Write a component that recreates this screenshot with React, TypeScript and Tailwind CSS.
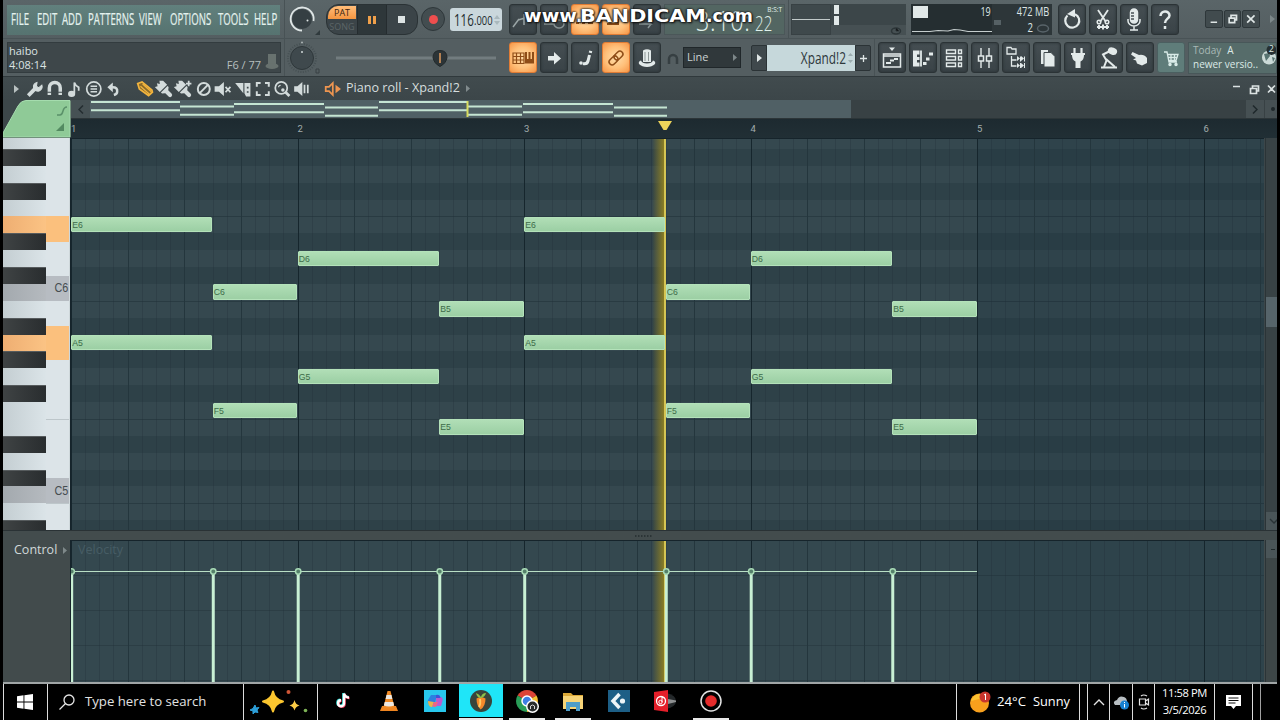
import * as React from "react";
import clsx from "clsx";

const ROW_H = 16.89;
const BAR_W = 226.5;

interface Note {
  name: string;
  row: number;
  start: number;
  length: number;
}

// rows are counted downwards from A6
const PATTERN: Note[] = [
  { name: "E6", row: 5, start: 0, length: 10 },
  { name: "A5", row: 12, start: 0, length: 10 },
  { name: "C6", row: 9, start: 10, length: 6 },
  { name: "F5", row: 16, start: 10, length: 6 },
  { name: "D6", row: 7, start: 16, length: 10 },
  { name: "G5", row: 14, start: 16, length: 10 },
  { name: "B5", row: 10, start: 26, length: 6 },
  { name: "E5", row: 17, start: 26, length: 6 },
];

const NOTES: Note[] = [...PATTERN, ...PATTERN.map((n) => ({ ...n, start: n.start + 32 }))];
const STARTS = [0, 10, 16, 26, 32, 42, 48, 58];

const SEMITONES = "A G# G F# F E D# D C# C B A# A G# G F# F E D# D C# C B A#".split(" ");

// [letter, height in semitones]
const WHITE_KEYS: [string, number][] = [
  ["A6", 1.5],
  ["G6", 2],
  ["F6", 1.5],
  ["E6", 1.5],
  ["D6", 2],
  ["C6", 1.5],
  ["B5", 1.5],
  ["A5", 2],
  ["G5", 2],
  ["F5", 1.5],
  ["E5", 1.5],
  ["D5", 2],
  ["C5", 1.5],
  ["B4", 1.5],
  ["A4", 2],
];

const OVERVIEW = [
  [1, 89, 2],
  [90, 54, 6.5],
  [144, 90, 4],
  [235, 53, 7.5],
  [289, 88, 2],
  [378, 54, 6.5],
  [433, 90, 4],
  [524, 53, 7.5],
];

function Tool({ children, on, teal }: { children?: React.ReactNode; on?: boolean; teal?: boolean }) {
  return (
    <div
      className={clsx(
        "h-[31px] w-7 shrink-0 rounded-[3px] border",
        on && "border-[#e07c35] bg-[radial-gradient(circle,#ffdca6_5%,#ffc07a_55%,#f79646)] text-[#8f4d17]",
        teal && "border-[#4b5f60] bg-[#5f7d7a] text-[#d9ebe8]",
        !on && !teal && "border-[#2b3336] bg-gradient-to-b from-[#454e52] to-[#3a4347] text-[#e3eaea] shadow-[inset_0_0_3px_#2a3235]"
      )}
    >
      <svg viewBox="0 0 28 30" className="-ml-px h-[30px] w-7" fill="none" stroke="currentColor" strokeWidth="1.5">
        {children}
      </svg>
    </div>
  );
}

function Glyph({ children, className }: { children: React.ReactNode; className?: string }) {
  return (
    <svg
      viewBox="1 1 18 18"
      className={clsx("h-5 w-[19.6px] shrink-0", className ?? "text-[#d3dbdb]")}
      fill="none"
      stroke="currentColor"
      strokeWidth="1.6"
    >
      {children}
    </svg>
  );
}

function Brush() {
  return (
    <g transform="translate(.5 .5) rotate(-45 10 10) scale(.95)" fill="currentColor" stroke="none">
      <path d="M5 1.500l2.500 1.500L9 .5l1.500 2.500L12.500.5 15 3v5.500H5z" />
      <path d="M5.500 9.500h9V11L12 13v4.500a2 2 0 0 1-4 0V13l-2.500-2z" />
    </g>
  );
}

function Knob({ bright }: { bright?: boolean }) {
  return (
    <svg viewBox="0 0 37 38" className="h-[38px] w-[37px] shrink-0">
      {bright ? (
        <>
          <circle cx="17" cy="19" r="10" fill="#353f43" />
          <path d="M17 30.500A11.500 11.500 0 1 1 28.500 21" fill="none" stroke="#dfe6e6" strokeWidth="1.800" />
          <circle cx="22.500" cy="20.500" r="1" fill="#dfe6e6" />
          <path d="M35 30v5h-5z" fill="#303a3d" />
        </>
      ) : (
        <>
          <circle cx="17" cy="19" r="14" fill="none" stroke="#465053" strokeWidth="2" strokeDasharray="1 1.500" />
          <circle cx="17" cy="19" r="11.500" fill="#3f494d" stroke="#2e373a" />
          <circle cx="17" cy="13" r="1" fill="#d0d8d8" />
          <circle cx="17" cy="3.500" r="1" fill="#aeb6b6" />
          <path d="M31 30h3v4h-3z" fill="none" stroke="#384144" />
        </>
      )}
    </svg>
  );
}

function Menu() {
  const items: [string, string][] = [
    ["FILE", "w-[25.500px]"],
    ["EDIT", "w-[25px]"],
    ["ADD", "w-[26px]"],
    ["PATTERNS", "w-[51px]"],
    ["VIEW", "w-[31px]"],
    ["OPTIONS", "w-[48px]"],
    ["TOOLS", "w-[36px]"],
    ["HELP", "w-[26px]"],
  ];
  return (
    <div className="mt-[5px] ml-1 flex h-[30px] w-[273px] shrink-0 items-center bg-gradient-to-b from-[#61807d] to-[#567370] pl-1">
      {items.map(([label, w]) => (
        <span key={label} className={clsx("shrink-0 text-[15.500px] text-[#e4f2ee]", w)}>
          <span className="inline-block origin-left scale-x-[.62] [-webkit-text-stroke:.2px_#e4f2ee]">{label}</span>
        </span>
      ))}
    </div>
  );
}

function TopRow() {
  return (
    <div className="flex h-[39px] border-b border-[#495356] bg-gradient-to-b from-[#5a6568] to-[#545e61]">
      <Menu />
      <div className="ml-1 border-l border-[#485255]">
        <Knob bright />
      </div>
      <div className="mt-1 ml-1 flex h-[31px] w-[92px] shrink-0 overflow-hidden rounded-[13px] border border-[#2a3235] bg-[#3b4448]">
        <div className="flex w-[30px] flex-col items-center text-[9px] leading-[13px]">
          <div className="mt-px h-[13px] w-[28px] rounded-tl-[10px] bg-gradient-to-b from-[#ffbd79] to-[#f5953f] text-center text-[#3c2510]">PAT</div>
          <div className="mt-px text-[#5b6467]">SONG</div>
        </div>
        <div className="flex w-[30px] items-center justify-center gap-0.5 border-x border-[#252c2f] bg-[#2e373a]">
          <span className="h-2 w-[3px] bg-[#f0a04a]" />
          <span className="h-2 w-[3px] bg-[#f0a04a]" />
        </div>
        <div className="flex grow items-center justify-center pr-0.5">
          <span className="size-[7px] bg-[#dde4e4]" />
        </div>
      </div>
      <div className="mt-[7px] ml-[3px] flex size-6 shrink-0 items-center justify-center rounded-full border border-[#2e373a] bg-[#434d50]">
        <span className="size-[9px] rounded-full bg-[#ee4e4e]" />
      </div>
      <div className="mt-2 ml-[5px] flex h-[23px] w-[52px] shrink-0 items-center rounded-[3px] bg-[#cad7dc] pl-1 text-[#222b2e]">
        <span className="w-[20px] text-[17px]"><span className="inline-block origin-left scale-x-[.68]">116</span></span>
        <span className="w-[20px] pt-1 text-[12.500px]"><span className="inline-block origin-left scale-x-75">.000</span></span>
        <svg viewBox="0 0 6 12" className="h-3 w-1.5"><path d="M0 5l3-4 3 4zM0 7l3 4 3-4z" fill="#a9b8bd" /></svg>
      </div>
      <div className="relative mt-1 ml-[7px] flex shrink-0 gap-[3px]">
        <Tool><path d="M4 22l6-8M9 15l7-2M15 9v11" stroke="#9aa5a6" /></Tool>
        <Tool><path d="M4 19h10a5 4 0 1 0 4-4" stroke="#879293" /></Tool>
        <Tool on><path d="M5 18h3m3 0h3m3 0h5" strokeWidth="2" /></Tool>
        <Tool on><path d="M5 19h11v-5" strokeWidth="2" /></Tool>
        <Tool><path d="M6 19h12l-3-3m3 3l-3 4" stroke="#879293" /></Tool>
        <div className="relative h-[31px] w-[121px] border border-[#4b5759] bg-[#536662] text-[#e0f1ec]">
          <span className="absolute top-[-4px] left-[31px] origin-left scale-x-[.87] text-[27px] font-light tracking-wide whitespace-nowrap">3:10:</span>
          <span className="absolute top-[3px] left-[90px] origin-left scale-x-[.72] text-[21px] font-light">22</span>
          <span className="absolute top-0 right-0.5 text-[6.500px] leading-[10px]">B:S:T</span>
        </div>
        <div className="absolute top-[-2px] left-[14.500px] flex items-baseline font-['DejaVu_Sans'] leading-[28px] font-bold whitespace-nowrap text-white [text-shadow:0_0_2px_#111,1px_1px_2px_#111,-1px_0_2px_#222]">
          <span className="inline-block w-[56px] text-[18px]"><span className="inline-block origin-left scale-x-[1.06]">www.</span></span>
          <span className="inline-block w-[126px] text-[18.500px]"><span className="inline-block origin-left scale-x-[1.12]">BANDICAM</span></span>
          <span className="text-[17px]"><span className="inline-block origin-left scale-x-[1.02]">.com</span></span>
        </div>
      </div>
      <div className="ml-[3px] border-l border-[#485255]" />
      <div className="mt-1 ml-[2px] flex h-[31px] w-[115px] shrink-0 bg-[#465053]">
        <div className="flex w-10 items-center border border-[#384144] bg-[#3f494c]">
          <span className="h-px w-full bg-[#c2caca]" />
        </div>
        <div className="w-[75px]">
          <div className="flex h-[21px] flex-col gap-[2px] bg-[#3c4649] pt-px pl-[3px]">
            <span className="h-[9px] w-[5px] bg-[#e1e8e8]" />
            <span className="h-[9px] w-[5px] bg-[#e1e8e8]" />
          </div>
          <div className="flex h-2.5 justify-end pr-1">
            <svg viewBox="0 0 12 10" className="h-2.5 w-3"><ellipse cx="6" cy="6" rx="4.500" ry="3" fill="none" stroke="#2c3538" strokeWidth="1.500" /><path d="M6 3v3h3" stroke="#2c3538" /></svg>
          </div>
        </div>
      </div>
      <div className="mt-1 ml-[5px] flex h-[31px] w-[141px] shrink-0 bg-[#2d3639] text-[12px] leading-[16px] text-[#dde5e5]">
        <div className="w-[81px] bg-[#252e31]">
          <div className="flex h-[15px] justify-between pr-px pl-[2px]">
            <span className="mt-0.5 h-3 w-[15px] bg-[#e1e8e8]" />
            <span className="origin-right scale-x-[.75]">19</span>
          </div>
          <svg viewBox="0 0 81 16" className="h-4 w-[81px]"><path d="M1 12.500h18l8-1 10 .5 6-1.500 6 .5 8 1.500h24" fill="none" stroke="#c6cece" strokeWidth="1.200" /></svg>
        </div>
        <div className="relative w-[60px] pr-[3px] text-right">
          <div className="h-4"><span className="inline-block origin-right scale-x-[.77]">472 MB</span></div>
          <div className="pr-4"><span className="inline-block origin-right scale-x-[.8]">2</span></div>
          <svg viewBox="0 0 60 31" className="absolute inset-0"><ellipse cx="51" cy="24.500" rx="5.500" ry="3.500" fill="none" stroke="#59646a" strokeWidth="1.500" /><rect x="2" y="16" width="7" height="5" fill="#566165" /></svg>
        </div>
      </div>
      <div className="mt-1 ml-1.5 flex shrink-0 gap-[3px]">
        <Tool><path d="M9.500 10.500A7 7 0 1 0 17 9.200" strokeWidth="2.200" /><path d="M9 9l8-5v8.500z" fill="currentColor" stroke="none" /></Tool>
        <Tool><path d="M9 5l8 12M19 5l-8 12" strokeWidth="1.800" /><circle cx="10" cy="17" r="1.800" /><circle cx="18" cy="17" r="1.800" /><path d="M8 22h12M14 19.500v5M10 20v4M18 20v4" strokeWidth="2" /></Tool>
        <Tool><rect x="10.500" y="4" width="7" height="14" rx="3.500" fill="currentColor" /><path d="M8 14v2a6 5 0 0 0 12 0v-2M14 21v4M10 25h8" /><path d="M11 8h3M11 11h3M11 14h3" stroke="#485155" /></Tool>
        <Tool><path d="M9.500 11c0-6 9-6 9-.5 0 3-4.500 3.500-4.500 7.500M14 21v3" strokeWidth="2.500" /></Tool>
      </div>
      <div className="mt-[10px] ml-[26px] flex shrink-0 gap-px text-[#dfe6e6]">
        {["M5 12h7", "M4.500 7.500h6v5h-6zM6.500 7V4.500h6v5H11", "M4.500 4.500l8 8M12.500 4.500l-8 8"].map((d) => (
          <svg key={d} viewBox="0 0 17 17" className="h-[18px] w-[17.700px] rounded-[2px] border border-[#2e373a] bg-[#414b4e]" fill="none" stroke="currentColor" strokeWidth="1.800">
            <path d={d} />
          </svg>
        ))}
      </div>
      <svg viewBox="0 0 5 8" className="mt-[15px] ml-[10px] h-2 w-[5px]"><path d="M0 0l5 4-5 4z" fill="#7d888a" /></svg>
    </div>
  );
}

function SecondRow() {
  return (
    <div className="flex h-[38px] border-b border-[#30393c] bg-[#545e61]">
      <div className="mt-[3px] ml-1 flex h-[31px] w-[274px] shrink-0 items-center justify-between border border-[#333c3f] bg-[#3e474a] px-px text-[11px] leading-[14px] text-[#dce3e3]">
        <div>
          <div>haibo</div>
          <div>4:08:14</div>
        </div>
        <div className="flex h-full items-end text-[#b6bfbf]">
          <span className="mr-1">F6 / 77</span>
          <svg viewBox="0 0 14 17" className="mb-0.5 h-[17px] w-3.5" fill="#68726f"><path d="M3 1h8v10H3z" /><ellipse cx="7" cy="13" rx="6.500" ry="3" /></svg>
        </div>
      </div>
      <div className="ml-[3px] border-l border-[#485255]"><Knob /></div>
      <div className="ml-[10px] flex w-[168px] shrink-0 items-center px-1">
        <svg viewBox="0 0 160 24" className="h-6 w-40">
          <path d="M0 12h160" stroke="#727c7f" strokeWidth="3" />
          <path d="M104 4.500q7 0 7 7-1 6-7 9-6-3-7-9 0-7 7-7z" fill="#2c3437" stroke="#22292b" />
          <path d="M104 7v10" stroke="#e19b5e" strokeWidth="1.500" />
        </svg>
      </div>
      <div className="mt-[3px] ml-[9px] flex shrink-0 gap-[3px]">
        <Tool on><path d="M4 10h11v10.500H4zM4 13.500h11M4 17h11M7.500 10v10.500M11.500 10v10.500" strokeWidth="1.200" /><path d="M16 9h2v7h1.500V9h2v7H23V9h2v11.500h-9z" fill="currentColor" stroke="none" /></Tool>
        <Tool><path d="M8 13h6V9l7 6.500-7 6v-4H8z" fill="currentColor" stroke="none" /></Tool>
        <Tool><circle cx="10" cy="20" r="1.800" fill="currentColor" stroke="none" /><path d="M12 20.500q4 1 5-2.500l1.500-6" strokeWidth="3" /><path d="M18 8.500l3 .8" strokeWidth="2" /></Tool>
        <Tool on><g transform="rotate(-45 14 15)"><rect x="5.500" y="12" width="10" height="6" rx="3" /><rect x="12.500" y="12" width="10" height="6" rx="3" /></g></Tool>
        <Tool><path d="M10 7.500q4-2.500 8 0V19h-8z" fill="currentColor" stroke="none" /><path d="M8 17.500q-3 1-2 3.500 3 3 8 3t8-3q1-2.500-2-3.500-1 3-6 3t-6-3z" fill="currentColor" stroke="none" /><path d="M12 9v9M15.500 9v9" stroke="#8d9797" strokeWidth="1" /></Tool>
      </div>
      <svg viewBox="0 0 14 14" className="mt-[13px] ml-[5px] h-3.5 w-3.5 shrink-0"><path d="M3 12V7a4 4 0 0 1 8 0v5" fill="none" stroke="#363f42" strokeWidth="2.500" /></svg>
      <div className="mt-2 ml-[3px] flex h-[21px] w-[58px] shrink-0 items-center justify-between border border-[#20272a] bg-[#30383b] px-[3px] text-[11px] text-[#cbd3d3]">
        Line
        <svg viewBox="0 0 4 7" className="h-[7px] w-1"><path d="M0 0l4 3.500L0 7z" fill="#7d8789" /></svg>
      </div>
      <div className="mt-[6px] ml-[10px] flex h-[26px] shrink-0 items-stretch">
        <div className="flex w-4 items-center justify-center rounded-l-[2px] border border-[#2b3336] bg-[#3f484c]">
          <svg viewBox="0 0 5 8" className="h-2 w-[5px]"><path d="M0 0l5 4-5 4z" fill="#e0e7e7" /></svg>
        </div>
        <div className="flex w-[88px] items-center justify-end bg-[#c6d8db] pr-0.5 text-[16px] text-[#2e393c]">
          <span className="mr-0.5 origin-right scale-x-[.74]">Xpand!2</span>
          <svg viewBox="0 0 5 12" className="h-3 w-[5px]"><path d="M0 4l2.500-3L5 4zM0 8l2.500 3L5 8z" fill="#9bacaf" /></svg>
        </div>
        <div className="flex w-4 items-center justify-center rounded-r-[2px] border border-[#2b3336] bg-[#3f484c]">
          <svg viewBox="0 0 7 7" className="size-[7px]"><path d="M3.500 0v7M0 3.500h7" stroke="#e0e7e7" strokeWidth="1.300" /></svg>
        </div>
      </div>
      <div className="ml-[3px] border-l border-[#485255]" />
      <div className="mt-[3px] ml-[3px] flex shrink-0 gap-[3px]">
        <Tool><path d="M11 4.500h6l-3 3.500z" fill="currentColor" stroke="none" /><path d="M5.500 11h17v13h-17zM5.500 13h17" /><path d="M8 20h5M12 17.500h4M16 16h4" strokeWidth="2" /></Tool>
        <Tool><path d="M4 7.500h6.500v4H8v2.500h2.500v3H8v2.500h2.500v4H4z" fill="currentColor" stroke="none" /><path d="M12 7.500v16" strokeWidth="1.800" /><path d="M14 20.500h3.500M17 16h3.500M20 11h4" strokeWidth="3" /></Tool>
        <Tool><path d="M6.500 7h9v3.500h-9zM6.500 13.500h9V17h-9zM6.500 20h9v3.500h-9zM18.500 7h3v3.500h-3zM18.500 13.500h3V17h-3zM18.500 20h3v3.500h-3z" strokeWidth="1.400" /></Tool>
        <Tool><path d="M10 5v20M18 5v20" strokeWidth="1.400" /><path d="M7.500 13h5v5h-5zM15.500 13h5v5h-5z" fill="#3f484c" /></Tool>
        <Tool><path d="M5 11V4.500h4l1 1.500h4v5zM9.500 13v10h5M9.500 17h5" strokeWidth="1.300" /><path d="M15 14l3 2.500-3 2.500zM19 14l3 2.500-3 2.500zM15 21l3 2.500-3 2.500zM19 21l3 2.500-3 2.500z" fill="currentColor" stroke="none" transform="translate(0 -1)" /><path d="M18.500 13.500v5M22.500 13.500v5M18.500 20v5M22.500 20v5" strokeWidth="1" /></Tool>
        <Tool><path d="M8 7h7v14H8z" fill="currentColor" stroke="none" /><path d="M11 9.500h7l4 4V24H11z" fill="currentColor" stroke="#3f484c" strokeWidth="1" /></Tool>
        <Tool><path d="M10.500 5v5M17.500 5v5" strokeWidth="2.200" /><path d="M7 10h14v2h-1q0 5-3.500 6.500V25h-5v-6.500Q8 17 8 12H7z" fill="currentColor" stroke="none" /></Tool>
        <Tool><path d="M15 8L8 11.500l3.500 6L9 24M11 16l9 8" strokeWidth="2" /><ellipse cx="17.500" cy="8" rx="4" ry="2.800" fill="currentColor" transform="rotate(20 17 8)" /><path d="M6 24.500h16" strokeWidth="2" /></Tool>
        <Tool><path d="M6.500 9l6.500 3q5-1 8 3v5l-5 2.500-5-2-1-3-3-1 3-1.500-5-3.500z" fill="currentColor" stroke="none" /></Tool>
        <Tool teal><path d="M7 9h3l2 10h8M11 11.500h10l-2 6h-7M14 11v6M17.500 11v6M11 14.500h9" strokeWidth="1.300" /><circle cx="13" cy="21.500" r="1" fill="currentColor" /><circle cx="19" cy="21.500" r="1" fill="currentColor" /></Tool>
      </div>
      <div className="relative mt-[3px] ml-[3px] h-[32px] grow overflow-hidden border border-[#485759] bg-[#566c6a] pl-1 text-[10px] leading-[14px] whitespace-nowrap text-[#dceae7]">
        <div><span className="mr-1.5 text-[#a9b9b6]">Today</span>A</div>
        <div>newer versio..</div>
        <svg viewBox="0 0 16 22" className="absolute top-0.5 right-0 h-[22px] w-4"><circle cx="9" cy="12.500" r="7" fill="#cbdad7" /><path d="M4 9l5-1 1 3-4 5zM12 12l3 1-2 4z" fill="#577371" /><circle cx="11.500" cy="5" r="5" fill="#263033" /></svg>
        <span className="absolute top-0 right-[2px] text-[9px] leading-[12px]">2</span>
      </div>
    </div>
  );
}

function PianoTitle() {
  return (
    <div className="flex h-[23px] items-center bg-gradient-to-b from-[#414b4e] to-[#3c4649] text-[#cfd7d7]">
      <svg viewBox="0 0 5 8" className="ml-[11px] h-2 w-[5px]"><path d="M0 0l5 4-5 4z" fill="#b8c0c0" /></svg>
      <div className="ml-[6px] flex">
        <Glyph><path d="M4 16l7-7" strokeWidth="3.500" /><path d="M16.500 6.500A4 4 0 1 1 12 4l-.5 3.500 2 1.500z" fill="currentColor" strokeWidth="1" /></Glyph>
        <Glyph><path d="M5 15.500V9a5 5 0 0 1 10 0v6.500" strokeWidth="3.200" /><path d="M3 13h4M13 13h4" stroke="#3f494c" strokeWidth="1" /></Glyph>
        <Glyph><ellipse cx="8" cy="14.500" rx="2.500" ry="2" fill="currentColor" /><path d="M10.500 14V4q1 3 4 4.500v3" /></Glyph>
        <Glyph><circle cx="10" cy="10" r="6.500" /><path d="M7 7.500h6M7 10h6M7 12.500h6" strokeWidth="1.300" /></Glyph>
        <Glyph><path d="M8 8.500h2q4.500 0 4 4 0 2-3 3" strokeWidth="2.300" /><path d="M5 8.500L10 4v9z" fill="currentColor" stroke="none" /></Glyph>
      </div>
      <div className="ml-3 flex">
        <Glyph className="text-[#f2b43e]"><path d="M3.500 5l4-1.500 9 7.500.5 2-3.500 3L5 10z" fill="#8a6a2a" /><path d="M6 7.500l8 7M8 5.500l8 7" strokeWidth="1.200" /></Glyph>
        <Glyph><Brush /></Glyph>
        <Glyph><Brush /><path d="M14.500 2.500v5M12 5h5" /></Glyph>
        <Glyph><circle cx="10" cy="10" r="5.500" strokeWidth="1.800" /><path d="M6 14l8-8" strokeWidth="1.800" /></Glyph>
        <Glyph><path d="M2.500 7.500h4L11 3.500v13l-4.500-4h-4z" fill="currentColor" stroke="none" /><path d="M12.500 8l4.500 5M17 8l-4.500 5" /></Glyph>
        <Glyph><path d="M3 4.500h7.500V14zM11.500 4.500H17V17h-4l-1.500-3z" fill="currentColor" stroke="none" /><path d="M14.500 8v1.500M14.500 12v1.500" stroke="#3f494c" /></Glyph>
        <Glyph><path d="M4.500 8V4.500H8M12 4.500h3.500V8M15.500 12v3.500H12M8 15.500H4.500V12" strokeWidth="1.800" /></Glyph>
        <Glyph><circle cx="9.500" cy="9" r="5.500" /><path d="M13.500 13l3.500 3.500" strokeWidth="2.500" /><path d="M7 8.500q0-2 2-2" strokeWidth="1" /><circle cx="11" cy="11" r="1.600" fill="currentColor" stroke="none" /></Glyph>
        <Glyph><path d="M3 7.500h3l4.500-4v13L6 12.500H3z" fill="currentColor" stroke="none" /><path d="M12.500 6v8M15.500 6v8" /></Glyph>
      </div>
      <Glyph className="ml-[12px] text-[#ee9550]"><path d="M3.500 8h3l3.500-3.500v11L6.500 12h-3z" /><path d="M12.500 6l5 4-5 4z" fill="currentColor" stroke="none" /></Glyph>
      <span className="ml-[3px] w-[117px] text-[12.600px] whitespace-nowrap text-[#d6dede]">Piano roll - Xpand!2</span>
      <svg viewBox="0 0 4 7" className="ml-[3px] h-[7px] w-1"><path d="M0 0l4 3.500L0 7z" fill="#818b8d" /></svg>
      <svg viewBox="0 0 44 14" className="ml-auto h-3.5 w-11" fill="none" stroke="#dbe2e2" strokeWidth="1.700">
        <path d="M0 4.500h7M17.500 6.500h6v5h-6zM19.500 6V4h6v5H24M35 3.500l7 7M42 3.500l-7 7" />
      </svg>
    </div>
  );
}

function Overview() {
  return (
    <div className="flex h-[19px] border-b border-[#2c3538] bg-[#384144]">
      <div className="flex w-[19px] shrink-0 items-center justify-center bg-[#465154] text-[#242d30]">
        <svg viewBox="0 0 6 9" className="h-[9px] w-1.5" fill="none" stroke="currentColor" strokeWidth="1.500"><path d="M5 .5l-4 4 4 4" /></svg>
      </div>
      <svg viewBox="0 0 761 18" className="h-[18px] w-[761px] shrink-0 bg-[#506065]">
        {OVERVIEW.map(([x, w, y]) => (
          <path key={x} d={`M${x} ${y}h${w}M${x} ${y + 8.3}h${w}`} stroke="#c5e5d3" strokeWidth="2" />
        ))}
        <path d="M377.500 1v16" stroke="#d9dc5e" strokeWidth="2" />
      </svg>
      <div className="ml-auto flex w-[18px] items-center justify-center bg-[#465053]">
        <svg viewBox="0 0 6 9" className="h-[9px] w-1.5" fill="none" stroke="#1f282b" strokeWidth="1.500"><path d="M1 .5l4 4-4 4" /></svg>
      </div>
      <div className="ml-px flex w-3 items-center justify-center bg-[#465053]"><span className="ml-1 size-1 rounded-full bg-[#1f282b]" /></div>
    </div>
  );
}

function Ruler() {
  return (
    <div className="relative flex h-[19px] bg-gradient-to-b from-[#1d2a30] to-[#212f35] font-['Roboto'] text-[9.500px] leading-[19px] text-[#a3adae]">
      {[1, 2, 3, 4, 5, 6].map((n) => (
        <div key={n} className={clsx(n < 6 ? "w-[226.500px] shrink-0" : "w-[60px]")}>
          {n}
        </div>
      ))}
      <svg viewBox="0 0 14 10" className="absolute top-0.5 left-[587px] h-2.5 w-3.5"><path d="M0 0h14L8.500 9h-3z" fill="#eed45a" /></svg>
    </div>
  );
}

function Steps() {
  return (
    <div className="absolute inset-y-0 left-0 flex">
      {Array.from({ length: 24 }, (_, beat) => (
        <div
          key={beat}
          className={clsx("flex w-[56.625px] shrink-0 border-l", beat % 4 === 0 ? "border-[#16262d]" : "border-[#24363d]", beat >= 16 && "bg-[#0a2530]/12")}
        >
          {[0, 1, 2].map((s) => (
            <div key={s} className="w-[14.150px] border-r border-[#203038]/30" />
          ))}
        </div>
      ))}
    </div>
  );
}

function Keyboard() {
  return (
    <div className="flex h-[392px] w-[67px] shrink-0 overflow-hidden border-r border-[#cfd8db] bg-[#dce4e8]">
      <div className="-mt-1.5 w-[43px] shrink-0">
        {SEMITONES.map((s, i) => (
          <div
            key={i}
            className={clsx(
              "h-[16.890px]",
              s.endsWith("#") && "border-t border-[#565b5d] bg-gradient-to-r from-[#3f4344] to-[#292d2f]",
              (i === 5 || i === 12) && "bg-gradient-to-r from-[#eeae72] to-[#fbc384]",
              s === "C" && "bg-gradient-to-r from-[#a3a9ae] to-[#b5babf]",
              !s.endsWith("#") && s !== "C" && i !== 5 && i !== 12 && "bg-gradient-to-r from-[#c4ced2] to-[#dbe4e8]"
            )}
          />
        ))}
      </div>
      <div className="-mt-1.5 w-[23px] shrink-0">
        {WHITE_KEYS.map(([name, h]) => (
          <div
            key={name}
            className={clsx(
              "flex items-center justify-end pr-px font-['Liberation_Sans'] text-[12px] text-[#454c50]",
              (name === "E6" || name === "A5") && "bg-[#fbc07d]",
              name.startsWith("C") && "bg-[#b7bcc2]",
              (name === "E5" || name === "B4") && "border-t border-[#bdc6ca]"
            )}
            style={{ height: h * ROW_H }}
          >
            {name.startsWith("C") && <span className="origin-right scale-x-[.9]">{name}</span>}
          </div>
        ))}
      </div>
    </div>
  );
}

function Playhead() {
  return <div className="absolute inset-y-0 left-[581px] w-[13.500px] border-r-2 border-[#d5c554] bg-gradient-to-r from-[#8a8430]/0 to-[#8a7d24]" />;
}

function NoteGrid() {
  return (
    <div className="relative h-[392px] w-[1194px] shrink-0 overflow-hidden border-t border-l border-[#16242b] bg-[#2d3f47]">
      <div className="-mt-[7px]">
        {SEMITONES.map((s, i) => (
          <div
            key={i}
            className={clsx("h-[16.890px]", s.endsWith("#") ? "bg-[#2e4148]" : "bg-[#35484f]", (s === "E" || s === "B") && "border-t border-[#293b42]")}
          />
        ))}
      </div>
      <Steps />
      <Playhead />
      {NOTES.map((n) => (
        <div
          key={`${n.name}-${n.start}`}
          className="absolute h-[15.500px] rounded-[1px] border border-[#b4e2ba] bg-gradient-to-b from-[#b0deb6] to-[#9ccfa4] font-['Liberation_Sans'] text-[8.700px] leading-[14px] text-[#3d6b48]"
          style={{ left: n.start * (BAR_W / 16) + 0.2, top: n.row * ROW_H - 6.7, width: n.length * (BAR_W / 16) - 0.4 }}
        >
          {n.name}
        </div>
      ))}
    </div>
  );
}

function Velocity() {
  return (
    <div className="relative h-[142px] w-[1194px] shrink-0 overflow-hidden border-t border-l border-[#16242b] bg-[#34484f]">
      {[0, 1, 2, 3].map((i) => (
        <div key={i} className="h-[35px] border-b border-[#2c3e45]" />
      ))}
      <Steps />
      <Playhead />
      <span className="absolute top-0 left-[7px] text-[12.500px] text-[#475d65]">Velocity</span>
      <svg viewBox="0 0 1194 142" className="absolute inset-0 h-[142px] w-[1194px]">
        <path d="M0 30.500h906" stroke="#b9dfc5" strokeWidth="1.200" />
        {STARTS.map((s) => {
          const x = s * (BAR_W / 16) + 0.7;
          return (
            <g key={s}>
              <path d={`M${x} 33v109`} stroke="#c8f0d4" strokeWidth="3" />
              <circle cx={x} cy="30.500" r="2.700" fill="#55806a" stroke="#a8dab6" strokeWidth="1.500" />
            </g>
          );
        })}
      </svg>
    </div>
  );
}

function PianoRoll() {
  return (
    <>
      <div className="flex h-[38px] bg-[#3c4649]">
        <svg viewBox="0 0 68 38" className="h-[38px] w-[68px] shrink-0">
          <path d="M0 37V33L15 6q3-5.500 8-5.500h44V37z" fill="#8fca97" stroke="#a5dcae" />
          <path d="M54 15h3q2 0 3-4t4-4" fill="none" stroke="#5a9069" strokeWidth="1.500" />
          <path d="M53 31l8-8v8z" fill="#538a61" />
        </svg>
        <div className="grow">
          <Overview />
          <Ruler />
        </div>
      </div>
      <div className="flex h-[392px] bg-[#3c4649]">
        <Keyboard />
        <NoteGrid />
        <div className="-mt-[18px] ml-px flex h-[410px] w-3 flex-col border-l border-[#2b3437] bg-[#384245] text-[#293336]">
          <div className="flex h-[18px] justify-end bg-[#4a5558] pt-1.5"><svg viewBox="0 0 8 6" className="h-1.5 w-2" fill="none" stroke="currentColor" strokeWidth="1.300"><path d="M1 5l4-4 4 4" /></svg></div>
          <div className="mt-[159px] h-[30px] bg-[#56646a]" />
          <div className="mt-auto flex h-[18px] justify-end bg-[#4a5558] pt-1.5"><svg viewBox="0 0 8 6" className="h-1.5 w-2" fill="none" stroke="currentColor" strokeWidth="1.300"><path d="M1 1l4 4 4-4" /></svg></div>
        </div>
      </div>
      <div className="flex h-2.5 items-center border-t border-[#2a3235] bg-[#434c4d] pl-[632px]">
        <svg viewBox="0 0 17 2" className="h-0.5 w-[17px]"><path d="M0 1h17" stroke="#252d2f" strokeWidth="1.500" strokeDasharray="1.500 1.500" /></svg>
      </div>
      <div className="flex h-[142px] bg-[#424b4c]">
        <div className="flex h-5 w-[67px] shrink-0 items-center pl-[11px] text-[12.500px] text-[#d0d8d8]">
          Control
          <svg viewBox="0 0 4 7" className="ml-[6px] h-[7px] w-1"><path d="M0 0l4 3.500L0 7z" fill="#7f898a" /></svg>
        </div>
        <Velocity />
        <div className="ml-px w-3 border-l border-[#2b3437] bg-[#3d4647]">
          <div className="flex h-[18px] items-center justify-end bg-[#4a5558] pr-0.5"><span className="h-px w-1 bg-[#202a2c]" /></div>
        </div>
      </div>
    </>
  );
}

function TaskIcon({ children, active, open }: { children: React.ReactNode; active?: boolean; open?: boolean }) {
  return (
    <div className="flex w-[46.100px] shrink-0 flex-col items-center">
      <div className={clsx("flex h-[33px] w-11 items-center justify-center", active && "bg-[#1fe5f8]")}>
        <svg viewBox="0 0 24 24" className="size-6">{children}</svg>
      </div>
      {(open || active) && <div className={clsx("mt-px h-0.5 bg-[#e8e8e8]", active ? "w-11" : "w-9")} />}
    </div>
  );
}

function Taskbar() {
  return (
    <div className="flex h-[38px] border-t-2 border-[#a0a5a6] bg-black text-white">
      <div className="flex w-[45px] shrink-0 items-center justify-center border-r border-l border-[#dcdcdc] pr-0.5">
        <svg viewBox="0 0 16 16" className="size-4" fill="#fff"><path d="M0 2.200L6.500 1.300V7.600H0zM7.400 1.200L16 0v7.600H7.400zM0 8.400h6.500v6.300L0 13.800zM7.400 8.400H16V16l-8.600-1.200z" /></svg>
      </div>
      <div className="flex w-[196px] shrink-0 items-center border-r border-[#dcdcdc] pl-[11px]">
        <svg viewBox="0 0 16 16" className="size-4" fill="none" stroke="#e6e6e6" strokeWidth="1.300"><circle cx="10" cy="6" r="5" /><path d="M6.500 9.500L.5 15.500" /></svg>
        <span className="ml-[10px] text-[13.200px] whitespace-nowrap text-[#e2e2e2]">Type here to search</span>
      </div>
      <div className="w-[74px] shrink-0 border-r border-[#dcdcdc]">
        <svg viewBox="0 0 73 36" className="h-9 w-[73px]">
          <path d="M29 7.500q1.500 8 10 10-8.500 2-10 10-1.500-8-10-10 8.500-2 10-10z" fill="#fbc62f" stroke="#fbc62f" strokeWidth="2" strokeLinejoin="round" />
          <path d="M50.500 16q1 4.500 5 5.500-4 1-5 5-1-4-5-5 4-1 5-5.500z" fill="#fbcb45" />
          <path d="M11 21l1 3 3-.5-2 2.500 1 2.500-3-.5-2 2v-3l-3-1 3-1.500z" fill="#2c9ed8" stroke="#2c9ed8" />
          <circle cx="44.500" cy="8" r="2" fill="#cf5636" /><circle cx="61.500" cy="26.500" r="1.800" fill="#7eb356" />
        </svg>
      </div>
      <div className="ml-[1.500px] flex">
        <TaskIcon>
          <path d="M13 4.500v10a3 3 0 1 1-3-3.300M13 4.500q1 4 5 4" fill="none" stroke="#26d9d2" strokeWidth="2.500" transform="translate(-.6 -.5)" />
          <path d="M13 4.500v10a3 3 0 1 1-3-3.300M13 4.500q1 4 5 4" fill="none" stroke="#e83b5b" strokeWidth="2.500" transform="translate(.6 .5)" />
          <path d="M13 4.500v10a3 3 0 1 1-3-3.300M13 4.500q1 4 5 4" fill="none" stroke="#fff" strokeWidth="2.400" />
        </TaskIcon>
        <TaskIcon>
          <path d="M5 17h14l2 5H3z" fill="#ef8520" /><path d="M10.500 2h3l4 16q-5.500 3-11 0z" fill="#f08a25" /><path d="M9.500 6h5l.8 4H8.600zM7.700 13h8.600l.8 3.500q-5 2-10.200 0z" fill="#ece8e2" />
        </TaskIcon>
        <TaskIcon>
          <path d="M1 1h22v22H1z" fill="#28c7ed" />
          <path d="M8 6h6l-2.500 9H7q-3 0-2-4z" fill="#2c7fe0" /><path d="M13 8h4q3.500 0 2.500 4l-1.500 5h-5z" fill="#b95bd0" /><path d="M5 12l6 1-2 5H8q-3-1-3-6z" fill="#e9b24a" /><path d="M13 6q4-1 4.500 3H13z" fill="#3a55d9" /><path d="M11 13h4l-2 5-4-.5z" fill="#ee6485" />
        </TaskIcon>
        <TaskIcon active>
          <circle cx="12" cy="12" r="11" fill="#39443b" /><path d="M7.500 9.500q4.500-3 9 0 0 8-5 11-4-4-4-11z" fill="#f5892a" /><path d="M11 10q1 5-1 8" stroke="#ffcb65" strokeWidth="1.800" fill="none" /><path d="M7 4q3 1 5 4 1-4 5-4-1 4-5 5-4 0-5-5z" fill="#8cc14a" />
        </TaskIcon>
        <TaskIcon open>
          <path d="M12 12L2.500 6.500A11 11 0 0 1 21.500 6.500z" fill="#dc4437" /><path d="M12 12l9.500-5.500A11 11 0 0 1 12 23z" fill="#f5c033" /><path d="M12 12v11A11 11 0 0 1 2.500 6.500z" fill="#299d58" /><circle cx="12" cy="12" r="5" fill="#3d7fe5" stroke="#fff" strokeWidth="1.500" />
          <circle cx="17.500" cy="17.500" r="6.500" fill="#fff" /><circle cx="17.500" cy="17.500" r="5" fill="#282b2c" /><path d="M15.500 20v-3q2-2 4 0v3" fill="none" stroke="#d8d8d8" />
        </TaskIcon>
        <TaskIcon open>
          <path d="M2 4h8l2 2h10v14H2z" fill="#dba837" /><path d="M2 7h20v13H2z" fill="#f7d477" /><path d="M5 13h14v9h-4v-4H9v4H5z" fill="#4e9dc8" />
        </TaskIcon>
        <TaskIcon>
          <path d="M1 1h22v22H1z" fill="#1d5f86" /><path d="M12.500 5L6 12l6.500 7" fill="none" stroke="#eef5f7" strokeWidth="3.500" /><circle cx="15.500" cy="12" r="2.600" fill="#eef5f7" />
        </TaskIcon>
        <TaskIcon>
          <path d="M13 4q10 2 10 8t-10 8z" fill="#24282a" /><path d="M15 10l8 1.500v1.500l-8 2z" fill="#8f9192" /><path d="M1 3l14-2v22L1 21z" fill="#e41f2a" /><circle cx="8" cy="12" r="4.500" fill="none" stroke="#fff" strokeWidth="1.300" /><circle cx="7.500" cy="13" r="1.700" fill="none" stroke="#fff" /><path d="M9 13V8l2 1" fill="none" stroke="#fff" />
        </TaskIcon>
        <TaskIcon open>
          <circle cx="12" cy="12" r="10" fill="none" stroke="#e3e3e3" strokeWidth="1.500" /><circle cx="12" cy="12" r="5.800" fill="#e52b2b" />
        </TaskIcon>
      </div>
      <div className="ml-auto flex w-[124px] shrink-0 items-center border-x border-[#dcdcdc] pl-3">
        <svg viewBox="0 0 22 24" className="h-6 w-[22px]"><circle cx="10.500" cy="13" r="9.500" fill="#f8a01d" /><path d="M2 11a9 9 0 0 1 9-7l3 4z" fill="#fcc231" /><circle cx="16" cy="7" r="5.500" fill="#c8352d" /><path d="M15 5l1.500-1v6" fill="none" stroke="#fff" /></svg>
        <span className="ml-[6px] w-[36px] text-[13.200px] whitespace-nowrap">24°C</span>
        <span className="text-[12.800px]">Sunny</span>
      </div>
      <div className="ml-[7px] flex w-[23px] shrink-0 items-center justify-center border-r border-l border-[#dcdcdc]">
        <svg viewBox="0 0 12 8" className="h-2 w-3" fill="none" stroke="#e4e4e4" strokeWidth="1.400"><path d="M1 7l5-5 5 5" /></svg>
      </div>
      <div className="flex w-[23px] shrink-0 items-center justify-center border-r border-[#dcdcdc]">
        <svg viewBox="0 0 16 16" className="size-4"><path d="M2 11q-3-4 2-5 2-5 7-3 3 1 3 5v3z" fill="#b8bec2" /><circle cx="11.500" cy="11" r="4.500" fill="#1681d2" /><path d="M11.500 10v3.500M11.500 8v1" stroke="#fff" /></svg>
      </div>
      <div className="flex w-[22px] shrink-0 items-center justify-center border-r border-[#dcdcdc]">
        <svg viewBox="0 0 12 16" className="h-4 w-3" fill="none" stroke="#e4e4e4" strokeWidth="1.200"><path d="M1.500 5h6v6h-6zM7.500 7l3-2v6l-3-2M3 2q2.500-2 6 0M3 14q2.500 2 6 0" /></svg>
      </div>
      <div className="w-[60px] shrink-0 border-r border-[#dcdcdc] text-center text-[11.200px] leading-[17px] tracking-[-.4px] whitespace-nowrap">
        <div>11:58 PM</div>
        <div>3/5/2026</div>
      </div>
      <div className="flex w-[38px] shrink-0 items-center justify-center border-r border-[#dcdcdc]">
        <svg viewBox="0 0 15 16" className="h-4 w-[15px]"><path d="M0 1h15v11H10l-2.500 3L5 12H0z" fill="#fff" /><path d="M2.500 4h10M2.500 6.500h10M2.500 9h7" stroke="#111" /></svg>
      </div>
      <div className="ml-[7px] w-[17px] shrink-0 border-l border-[#a0a0a0]" />
    </div>
  );
}

export default function App() {
  return (
    <div className="h-[720px] w-[1280px] overflow-hidden bg-black px-[3px] font-['Open_Sans','Noto_Sans',sans-serif]">
      <TopRow />
      <SecondRow />
      <PianoTitle />
      <PianoRoll />
      <Taskbar />
    </div>
  );
}
